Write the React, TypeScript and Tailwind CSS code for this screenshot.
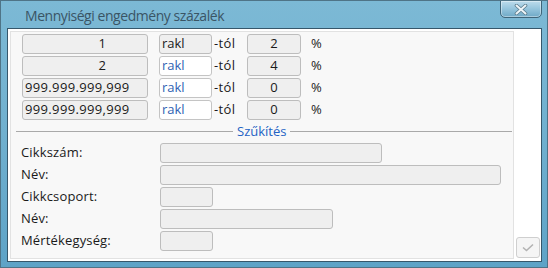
import React from "react";

const font = { fontFamily: '"Open Sans", "Noto Sans", sans-serif' };

function NumBox({ v, center }: { v: string; center?: boolean }) {
  return (
    <div className="w-[126px] h-[20px] rounded-[3px] border border-[#bdbdbd] bg-[#efefef] flex items-center text-[13px] text-[#1a1a1a]">
      {center ? (
        <div className="w-[83px] text-right">{v}</div>
      ) : (
        <div className="pl-[2px] tracking-[0.35px]">{v}</div>
      )}
    </div>
  );
}

function Row({ n, center, p, first }: { n: string; center?: boolean; p: string; first?: boolean }) {
  return (
    <div className="flex items-center h-[20px]">
      <NumBox v={n} center={center} />
      <div
        className={
          "ml-[11px] w-[53px] h-[20px] rounded-[3px] border flex items-center pl-[2px] text-[13px] " +
          (first ? "border-[#bdbdbd] bg-[#efefef] text-[#1a1a1a]" : "border-[#c4c4c4] bg-white text-[#2f5fb3]")
        }
      >
        rakl
      </div>
      <div className="w-[35px] pl-[2px] text-[13px] text-[#1a1a1a] tracking-[0.4px]">-tól</div>
      <div className="w-[54px] h-[20px] rounded-[3px] border border-[#bdbdbd] bg-[#efefef] flex items-center justify-center text-[13px] text-[#1a1a1a]">
        {p}
      </div>
      <div className="ml-[10px] text-[13px] text-[#1a1a1a]">%</div>
    </div>
  );
}

function Field({ label, w }: { label: string; w: string }) {
  return (
    <div className="flex items-center h-[20px]">
      <div className="w-[139px] text-[13px] text-[#1a1a1a] tracking-[0.15px]">{label}</div>
      <div className={"h-[20px] rounded-[3px] border border-[#bdbdbd] bg-[#efefef] " + w} />
    </div>
  );
}

export default function App() {
  return (
    <div
      className="w-[548px] h-[268px] relative overflow-hidden border border-[#4f7487] bg-gradient-to-b from-[#7cb9d5] via-[#70b0cf] to-[#5ea3c7]"
      style={font}
    >
      <div className="h-[27px] pl-[24px] pt-[5px] text-[14px] leading-[20px] text-[#3a5565] tracking-[-0.45px]">
        Mennyiségi engedmény százalék
      </div>
      <div className="absolute top-[-1px] right-[5px] w-[42px] h-[18px] rounded-b-[5px] border border-[#3f6579] bg-gradient-to-b from-[#bddcec] via-[#94c4dc] to-[#6fa9c6] flex items-center justify-center shadow-[inset_0_0_0_1px_rgba(255,255,255,0.4)]">
        <svg width="14" height="11" viewBox="0 0 14 11">
          <path d="M2.5 1.5 L11.5 9.5 M11.5 1.5 L2.5 9.5" stroke="#5a7b8c" strokeWidth="3.6" strokeLinecap="round" />
          <path d="M2.5 1.5 L11.5 9.5 M11.5 1.5 L2.5 9.5" stroke="#eef5f8" strokeWidth="2" strokeLinecap="round" />
        </svg>
      </div>
      <div className="ml-[6px] w-[535px] h-[234px] border border-[#36576b] bg-white flex">
        <div className="ml-[2px] mt-[2px] w-[504px] h-[228px] border border-[#e2e2e2] bg-[#f8f8f8] flex flex-col">
          <div className="pl-[11px] pt-[2px] flex flex-col gap-[2px]">
            <Row n="1" center p="2" first />
            <Row n="2" center p="4" />
            <Row n="999.999.999,999" p="0" />
            <Row n="999.999.999,999" p="0" />
          </div>
          <div className="mt-[3px] h-[16px] flex items-center pl-[5px] pr-[1px]">
            <div className="w-[217px] h-px bg-[#a9a9a9]" />
            <div className="px-[4px] text-[13px] text-[#2463c4] leading-[16px]">Szűkítés</div>
            <div className="flex-1 h-px bg-[#a9a9a9]" />
          </div>
          <div className="mt-[4px] pl-[10px] flex flex-col gap-[2px]">
            <Field label="Cikkszám:" w="w-[222px]" />
            <Field label="Név:" w="w-[341px]" />
            <Field label="Cikkcsoport:" w="w-[53px]" />
            <Field label="Név:" w="w-[173px]" />
            <Field label="Mértékegység:" w="w-[53px]" />
          </div>
        </div>
        <div className="flex-1 flex flex-col justify-end pb-[3px] pl-[2px]">
          <div className="w-[24px] h-[21px] rounded-[3px] border border-[#cfcfcf] bg-[#f5f5f5] flex items-center justify-center">
            <svg width="12" height="9" viewBox="0 0 12 9">
              <path d="M1 4.5 L4.5 7.5 L11 1.5" stroke="#b3b3b3" strokeWidth="1.6" fill="none" />
            </svg>
          </div>
        </div>
      </div>
    </div>
  );
}
